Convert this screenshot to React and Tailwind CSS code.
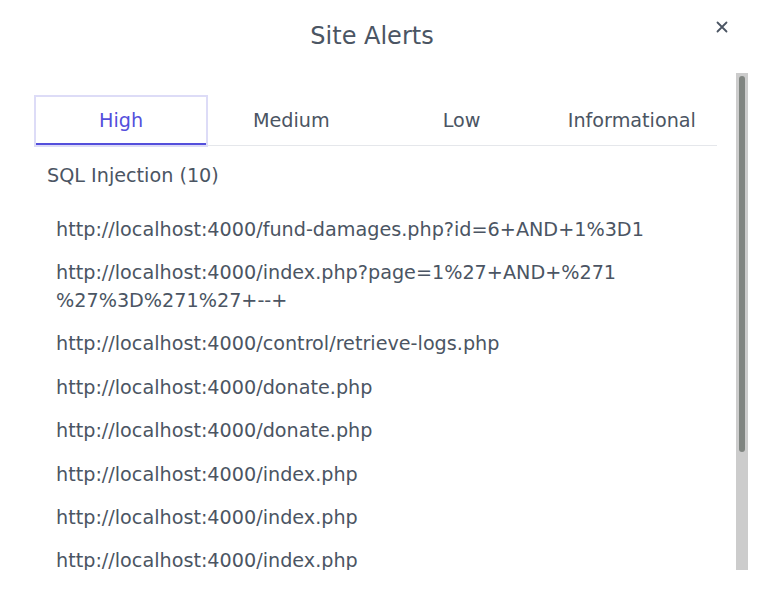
import React, { useState } from "react";

const urls = [
  "http://localhost:4000/fund-damages.php?id=6+AND+1%3D1",
  "http://localhost:4000/index.php?page=1%27+AND+%271 %27%3D%271%27+--+",
  "http://localhost:4000/control/retrieve-logs.php",
  "http://localhost:4000/donate.php",
  "http://localhost:4000/donate.php",
  "http://localhost:4000/index.php",
  "http://localhost:4000/index.php",
  "http://localhost:4000/index.php",
  "http://localhost:4000/index.php",
  "http://localhost:4000/about.php",
];

const tabs = ["High", "Medium", "Low", "Informational"];

const App = () => {
  const [active, setActive] = useState("High");

  return (
    <div className="w-[766px] h-[608px] bg-white text-[#4b5563] font-['DejaVu_Sans',sans-serif] relative">
      {/* Header */}
      <div className="h-[73px]">
        <h1 className="w-[744px] text-center text-[24px] leading-[32px] pt-[20px]">
          Site Alerts
        </h1>
        <button className="absolute top-[20px] left-[715px] w-[14px] h-[14px] flex items-center justify-center">
          <svg width="12" height="12" viewBox="0 0 12 12">
            <path
              d="M1.5 1.5 L10.5 10.5 M10.5 1.5 L1.5 10.5"
              stroke="#4b5563"
              strokeWidth="1.8"
              strokeLinecap="round"
            />
          </svg>
        </button>
      </div>

      {/* Body with scrollbar */}
      <div className="ml-5 w-[728px] h-[497px] flex">
        <div className="w-[716px] h-full overflow-hidden pl-4 pr-[19px] pt-6">
          {/* Tabs */}
          <div className="grid grid-cols-4 border-b border-gray-200">
            {tabs.map((tab) => (
              <button
                key={tab}
                onClick={() => setActive(tab)}
                className={
                  tab === active
                    ? "h-12 pt-[2px] text-[19.2px] text-[#544fdc] border-b-2 border-[#544fdc] ring-2 ring-[#dddcf7]"
                    : "h-12 pt-[2px] text-[19.2px] border-b-2 border-transparent"
                }
              >
                {tab}
              </button>
            ))}
          </div>

          <h2 className="mt-4 pl-[11px] text-[19.2px] leading-[28px]">
            SQL Injection (10)
          </h2>

          <ul className="mt-[18px] pl-5">
            {urls.map((url, i) => (
              <li key={i} className="py-[7.7px] text-[19.2px] leading-[28px] break-words">
                {url}
              </li>
            ))}
          </ul>
        </div>

        {/* Scrollbar */}
        <div className="w-3 h-full bg-[#cccccc] pt-[3px] px-[3px]">
          <div className="h-[376px] rounded-[3px] bg-[#808581]"></div>
        </div>
      </div>
    </div>
  );
};

export default App;
